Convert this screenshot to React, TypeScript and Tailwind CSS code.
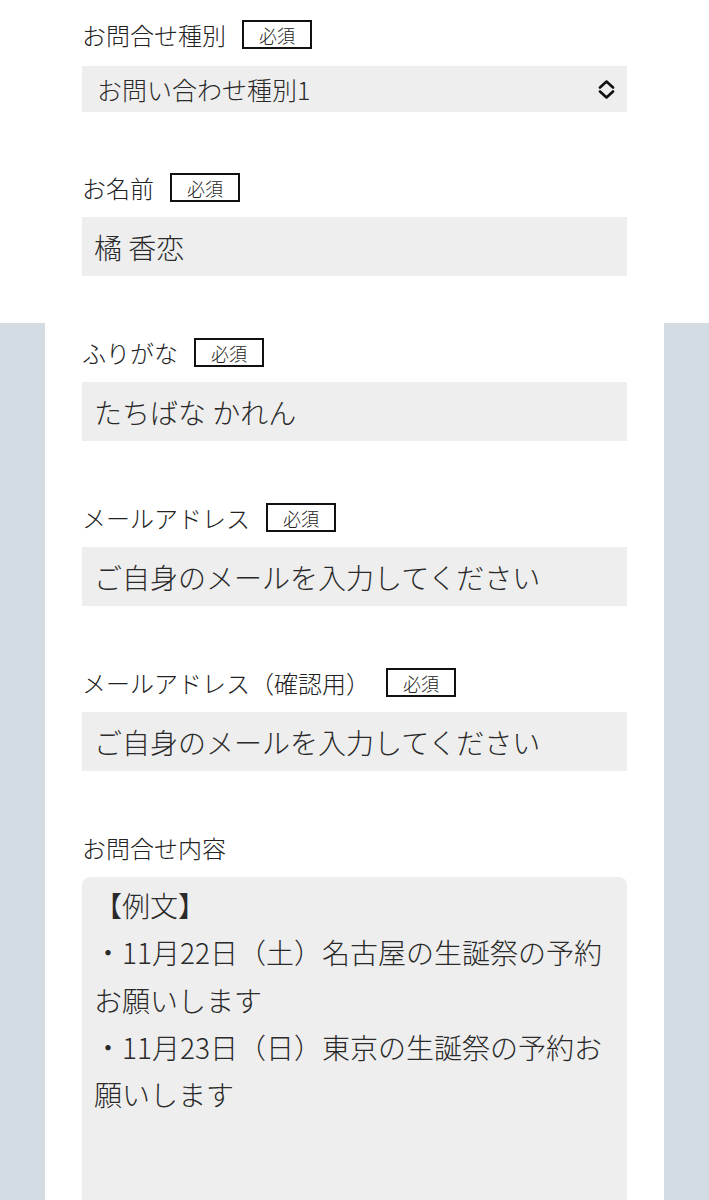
const font = { fontFamily: '"Noto Sans CJK JP", "Noto Sans", sans-serif' };

function Badge() {
  return (
    <span className="ml-4 inline-flex h-[29px] w-[70px] items-center justify-center border-2 border-[#111] text-[18px] leading-none text-[#222]">
      必須
    </span>
  );
}

function Label({ text, required = true }: { text: string; required?: boolean }) {
  return (
    <div className="flex h-[29px] items-center text-[24px] leading-none text-[#222]">
      <span>{text}</span>
      {required && <Badge />}
    </div>
  );
}

function TextField({ label, value }: { label: string; value: string }) {
  return (
    <div className="mb-[62px]">
      <Label text={label} />
      <div className="mt-[15px] flex h-[59px] items-center bg-[#eeeeee] pl-[12px] text-[28px] leading-none text-[#2a2a2a]">
        {value}
      </div>
    </div>
  );
}

export default function App() {
  return (
    <div
      className="min-h-[1200px] bg-[linear-gradient(to_bottom,#ffffff_323px,#d4dce3_323px)] font-light"
      style={font}
    >
      <div className="mx-[45px] min-h-[1200px] bg-white px-[37px] pt-[20px]">
        <div className="mb-[61px]">
          <Label text="お問合せ種別" />
          <div className="mt-[17px] flex h-[46px] items-center justify-between bg-[#eeeeee] pl-[15px] pr-[12px] text-[25px] leading-none text-[#2a2a2a]">
            <span>お問い合わせ種別1</span>
            <svg width="17" height="19" viewBox="0 0 17 19" fill="none" stroke="#111" strokeWidth="2.6" strokeLinecap="round" strokeLinejoin="round">
              <path d="M2 7.5 L8.5 1.5 L15 7.5" />
              <path d="M2 11.5 L8.5 17.5 L15 11.5" />
            </svg>
          </div>
        </div>

        <TextField label="お名前" value="橘 香恋" />
        <TextField label="ふりがな" value="たちばな かれん" />
        <TextField label="メールアドレス" value="ご自身のメールを入力してください" />
        <TextField label="メールアドレス（確認用）" value="ご自身のメールを入力してください" />

        <div>
          <Label text="お問合せ内容" required={false} />
          <div className="mt-[15px] h-[340px] rounded-lg bg-[#eeeeee] px-[12px] pt-[5px] text-[28px] leading-[47.3px] text-[#2a2a2a]">
            <p>【例文】</p>
            <p>・11月22日（土）名古屋の生誕祭の予約お願いします</p>
            <p>・11月23日（日）東京の生誕祭の予約お願いします</p>
          </div>
        </div>
      </div>
    </div>
  );
}
